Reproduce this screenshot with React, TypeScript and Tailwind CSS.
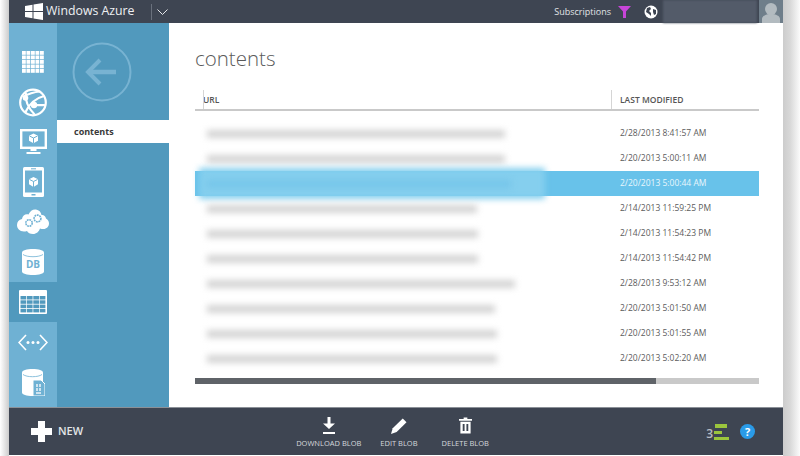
const rows = [
  { w: 298, date: '2/28/2013 8:41:57 AM' },
  { w: 298, date: '2/20/2013 5:00:11 AM' },
  { w: 304, date: '2/20/2013 5:00:44 AM', selected: true },
  { w: 270, date: '2/14/2013 11:59:25 PM' },
  { w: 271, date: '2/14/2013 11:54:23 PM' },
  { w: 271, date: '2/14/2013 11:54:42 PM' },
  { w: 308, date: '2/28/2013 9:53:12 AM' },
  { w: 288, date: '2/20/2013 5:01:50 AM' },
  { w: 290, date: '2/20/2013 5:01:55 AM' },
  { w: 290, date: '2/20/2013 5:02:20 AM' },
];

function WindowsLogo() {
  return (
    <svg width="18" height="17" viewBox="0 0 18 17" fill="#fff">
      <path d="M0 3l7.5-1.3v6.2H0zM8.500 1.500L18 0v7.900H8.500zM0 9h7.500v6.300L0 14zM8.500 9H18v8l-9.500-1.500z" />
    </svg>
  );
}

function GridIcon() {
  return (
    <svg width="22" height="22" viewBox="0 0 22 22" fill="#fff">
      {[0, 1, 2, 3, 4].map((r) =>
        [0, 1, 2, 3, 4].map((c) => <rect key={`${r}-${c}`} x={c * 4.5} y={r * 4.5} width="3.800" height="3.800" />),
      )}
    </svg>
  );
}

function GlobeIcon() {
  return (
    <svg width="28" height="29" viewBox="0 0 28 29" fill="none" stroke="#fff">
      <circle cx="14" cy="14.500" r="12.800" strokeWidth="2.200" />
      <path d="M4 9c5-3 11-5 17-5.500M7 5c-1 7 2 15 9 22M25 8C17 10 10 16 6 25M15 17c4 0 8 .5 11 0" strokeWidth="2.200" />
      <circle cx="6.500" cy="10" r="2.800" fill="#fff" stroke="none" />
      <circle cx="15" cy="17" r="3.200" fill="#fff" stroke="none" />
    </svg>
  );
}

function MonitorIcon() {
  return (
    <svg width="27" height="27" viewBox="0 0 27 27" fill="none">
      <rect x="1.200" y="1.200" width="24.600" height="17.600" stroke="#fff" strokeWidth="2.400" />
      <path d="M13.500 4.500l4.500 2.300v5l-4.500 2.500L9 11.800v-5z" fill="#fff" />
      <path d="M9.500 7l4 2 4-2M13.500 9v5" stroke="#6fb1d3" strokeWidth="1" />
      <path d="M10.500 19h6v3h-6zM6.500 23h14v2h-14z" fill="#fff" />
    </svg>
  );
}

function PhoneIcon() {
  return (
    <svg width="21" height="30" viewBox="0 0 21 30">
      <rect width="21" height="30" rx="1.500" fill="#fff" />
      <rect x="2" y="3.500" width="17" height="22" fill="#6fb1d3" />
      <rect x="8" y="1.300" width="5" height="1" fill="#6fb1d3" />
      <rect x="8.500" y="27" width="4" height="1.500" fill="#6fb1d3" />
      <path d="M10.500 10l4.500 2.300v5L10.500 20 6 17.300v-5z" fill="#fff" />
      <path d="M6.500 12.500l4 2 4-2M10.500 14.500V20" stroke="#6fb1d3" strokeWidth="1" fill="none" />
    </svg>
  );
}

function CloudIcon() {
  return (
    <svg width="32" height="26" viewBox="0 0 32 26">
      <path
        d="M7 22.500C2.500 22.500 0 19.500 0 16c0-3 2-5.500 5-6 .5-3.500 3.500-5.500 6.500-4.500C13 2 16 0 19 .5c3 .5 5 2.500 5.500 5.500 2-.5 4 1 4.500 3.500 2 1 3 3 3 5 0 3-2.500 5.500-5.500 5.500-1.500 0-2.500 0-3.500-.5-1 3-3.500 5.500-7 5.500-3 0-5-1-6-3-1 .5-2 .5-3 .5z"
        fill="#fff"
      />
      <circle cx="12" cy="14" r="3.200" fill="none" stroke="#6fb1d3" strokeWidth="1.600" strokeDasharray="1.800 .7" />
      <circle cx="20.500" cy="9.500" r="3.400" fill="none" stroke="#6fb1d3" strokeWidth="1.600" strokeDasharray="1.800 .7" />
    </svg>
  );
}

function DbIcon() {
  return (
    <svg width="22" height="26" viewBox="0 0 22 26">
      <path d="M0 3.500C0 1.500 5 0 11 0s11 1.500 11 3.500v19c0 2-5 3.500-11 3.500S0 24.500 0 22.500z" fill="#fff" />
      <path d="M1 5.500c2 1.500 6 2.200 10 2.200s8-.7 10-2.200" fill="none" stroke="#6fb1d3" strokeWidth=".8" />
    </svg>
  );
}

function TableIcon() {
  return (
    <svg width="28" height="24" viewBox="0 0 28 24">
      <rect width="28" height="24" rx="1" fill="#fff" />
      {[0, 1, 2, 3].map((r) =>
        [0, 1, 2, 3].map((c) => (
          <rect key={`${r}-${c}`} x={1.500 + c * 6.400} y={6 + r * 4.300} width="5.700" height="3.500" fill="#5199bd" />
        )),
      )}
    </svg>
  );
}

function CodeIcon() {
  return (
    <svg width="30" height="17" viewBox="0 0 30 17" fill="none" stroke="#fff" strokeWidth="1.600">
      <path d="M8 1L1 8.500 8 16M22 1l7 7.500L22 16" />
      <circle cx="10" cy="8.500" r="1.500" fill="#fff" stroke="none" />
      <circle cx="15" cy="8.500" r="1.500" fill="#fff" stroke="none" />
      <circle cx="20" cy="8.500" r="1.500" fill="#fff" stroke="none" />
    </svg>
  );
}

function SqlIcon() {
  return (
    <svg width="23" height="27" viewBox="0 0 23 27">
      <path d="M0 3.500C0 1.500 4.500 0 10.500 0S21 1.500 21 3.500v20c0 2-4.500 3.500-10.500 3.500S0 25.500 0 23.500z" fill="#fff" />
      <path d="M1 5.500c2 1.500 5.500 2.200 9.500 2.200S18 7 20 5.500" fill="none" stroke="#6fb1d3" strokeWidth=".8" />
      <path d="M11 11h8l4 4v12H11z" fill="#6fb1d3" stroke="#fff" strokeWidth="1" />
      <path d="M14 15h2v3h-2zM17 15h2v3h-2zM14 19h2v3h-2zM17 19h2v3h-2zM14 23h5v2h-5z" fill="#cfe4f0" />
    </svg>
  );
}

function BackIcon() {
  return (
    <svg width="60" height="60" viewBox="0 0 60 60" fill="none" stroke="#78b3d2">
      <circle cx="30" cy="30" r="28.500" strokeWidth="2" />
      <path d="M28 18L16 30l12 12" strokeWidth="4" />
      <path d="M18 30h26" strokeWidth="4.500" />
    </svg>
  );
}

function NavItem({ children, active }: { children: React.ReactNode; active?: boolean }) {
  return (
    <div className={`h-[40px] flex items-center justify-center ${active ? 'bg-[#5199bd]' : ''}`}>{children}</div>
  );
}

function FooterAction({ icon, label, className }: { icon: React.ReactNode; label: string; className?: string }) {
  return (
    <div className={`flex flex-col items-center gap-[3px] ${className ?? ''}`}>
      <div className="h-[20px] flex items-center">{icon}</div>
      <span className="text-[7.500px] leading-[9px] text-[#d5d8dc] whitespace-nowrap">{label}</span>
    </div>
  );
}

export default function App() {
  return (
    <div
      className="w-[800px] h-[456px] overflow-hidden flex bg-[linear-gradient(90deg,#fff_0,#ccc_9px,#ccc_783px,#d8d8d8_790px,#fbfbfb_800px)] pr-[17px] pl-[9px]"
      style={{ fontFamily: '"Open Sans", "Liberation Sans", sans-serif' }}
    >
      <div className="flex-1 flex flex-col bg-white min-w-0">
        {/* top bar */}
        <div className="h-[23px] shrink-0 bg-[#3e4552] flex items-center text-white">
          <div className="ml-[16px]"><WindowsLogo /></div>
          <span className="ml-[3px] text-[12.300px] text-[#eef0f2] whitespace-nowrap">Windows Azure</span>
          <div className="ml-[16px] w-px h-[16px] bg-[#6a717d]" />
          <svg className="ml-[5px]" width="11" height="6" viewBox="0 0 11 6" fill="none" stroke="#e6e8ea" strokeWidth="1">
            <path d="M.5.500l5 5 5-5" />
          </svg>
          <span className="ml-auto text-[9px] text-[#e2e4e7] whitespace-nowrap">Subscriptions</span>
          <svg className="ml-[7px]" width="13" height="13" viewBox="0 0 13 13" fill="#c745d8">
            <path d="M0 1h13L8 6.500V13H5V6.500z" />
          </svg>
          <svg className="ml-[13px]" width="14" height="14" viewBox="0 0 14 14">
            <circle cx="7" cy="7" r="6.500" fill="#fff" />
            <path d="M3 3l3-1 1 2-2 2 2 2v3L5 9 2 7zM9 4l3 1v4l-2 1-1-3z" fill="#3e4552" />
          </svg>
          <div className="ml-[5px] w-[94px] h-[23px] bg-[#535b69] blur-[1px]" />
          <div className="ml-[2px] w-[24px] h-[23px] bg-[#6f7e8a] flex items-end justify-center overflow-hidden">
            <svg width="20" height="21" viewBox="0 0 20 21" fill="#b3bbc0">
              <circle cx="10" cy="7" r="6" />
              <path d="M1 21v-4c0-3 4-5 9-5s9 2 9 5v4z" />
            </svg>
          </div>
        </div>

        <div className="flex-1 flex min-h-0">
          {/* icon rail */}
          <div className="w-[48px] shrink-0 bg-[#5199bd] flex flex-col">
            <div className="bg-[#6fb1d3] pt-[19px] flex flex-col">
              <NavItem><GridIcon /></NavItem>
              <NavItem><GlobeIcon /></NavItem>
              <NavItem><MonitorIcon /></NavItem>
              <NavItem><PhoneIcon /></NavItem>
              <NavItem><CloudIcon /></NavItem>
              <NavItem>
                <div className="relative">
                  <DbIcon />
                  <span className="absolute inset-x-0 top-[9px] text-center text-[10px] leading-[12px] font-bold text-[#6fb1d3]">DB</span>
                </div>
              </NavItem>
            </div>
            <NavItem active><TableIcon /></NavItem>
            <div className="bg-[#6fb1d3] flex-1 flex flex-col">
              <NavItem><CodeIcon /></NavItem>
              <NavItem><SqlIcon /></NavItem>
            </div>
          </div>

          {/* sub nav */}
          <div className="w-[112px] shrink-0 bg-[#5199bd]">
            <div className="pl-[15px] pt-[19px]"><BackIcon /></div>
            <div className="mt-[18px] h-[23px] bg-white flex items-center pl-[17px] text-[9px] font-bold text-[#3a3a3a]">contents</div>
          </div>

          {/* content */}
          <div className="flex-1 min-w-0 pl-[26px] pr-[24px] flex flex-col">
            <h1 className="mt-[18px] h-[34px] text-[20.500px] leading-[34px] font-light text-[#5a5a5a]">contents</h1>
            <div className="mt-[15px] h-[21px] flex border-b-2 border-[#c9c9c9] text-[8.500px] font-semibold text-[#555] shrink-0">
              <div className="w-[416px] pl-[8px] relative flex items-center pt-[2px]">
                <span className="absolute left-[8px] top-0 bottom-0 w-px bg-[#d5d5d5]" />
                URL
              </div>
              <div className="flex-1 border-l border-[#d5d5d5] pl-[8px] flex items-center pt-[2px]">LAST MODIFIED</div>
            </div>
            <div className="mt-[10px]">
              {rows.map((row) => (
                <div key={row.date} className={`h-[25px] flex items-center relative ${row.selected ? 'bg-[#68c2ea]' : ''}`}>
                  {row.selected && (
                    <div className="absolute left-[4px] top-[-3px] w-[346px] h-[31px] bg-[#85cfee] blur-[3px]" />
                  )}
                  <div className="w-[416px] shrink-0 pl-[12px] relative">
                    <div
                      className={`h-[8px] blur-[3px] ${row.selected ? 'bg-[#76c6ea]' : 'bg-[#d4d4d4]'}`}
                      style={{ width: row.w }}
                    />
                  </div>
                  <span className={`pl-[9px] text-[8.500px] whitespace-nowrap relative ${row.selected ? 'text-[#e8f6fc]' : 'text-[#5c5c5c]'}`}>
                    {row.date}
                  </span>
                </div>
              ))}
            </div>
            <div className="mt-[7px] h-[6px] bg-[#c9c9c9] shrink-0">
              <div className="w-[461px] h-full bg-[#5f6368]" />
            </div>
          </div>
        </div>

        {/* footer */}
        <div className="h-[48px] shrink-0 bg-[#3e4552] border-t border-[#8b9097] flex items-center text-white">
          <svg className="ml-[22px]" width="21" height="21" viewBox="0 0 21 21" fill="#fff">
            <path d="M7 0h7v7h7v7h-7v7H7v-7H0V7h7z" />
          </svg>
          <span className="ml-[6px] text-[11px] font-semibold text-[#e3e5e8]">NEW</span>
          <FooterAction
            className="ml-[213px]"
            label="DOWNLOAD BLOB"
            icon={
              <svg width="12" height="17" viewBox="0 0 12 17" fill="#fff">
                <path d="M4.500 0h3v6.500H12L6 12 0 6.500h4.500zM0 15h12v2H0z" />
              </svg>
            }
          />
          <FooterAction
            className="ml-[19px]"
            label="EDIT BLOB"
            icon={
              <svg width="16" height="16" viewBox="0 0 17 17" fill="#fff">
                <path d="M12.500 0.500l4 4L6 15 0 17l1.800-6z" />
              </svg>
            }
          />
          <FooterAction
            className="ml-[24px]"
            label="DELETE BLOB"
            icon={
              <svg width="13" height="17" viewBox="0 0 14 17" fill="#fff">
                <path d="M5 0h4v1.500h5V3.500H0V1.500h5zM1.500 4.500h11V17h-11zM4 7v7.500h2V7zM8 7v7.500h2V7z" fillRule="evenodd" />
              </svg>
            }
          />
          <div className="ml-auto mr-[28px] flex items-center">
            <span className="text-[12px] font-semibold text-[#b8bcc2] mt-[4px]">3</span>
            <div className="ml-[1px] flex flex-col gap-[3px] mr-[11px]">
              <div className="ml-px w-[12px] h-[4px] bg-[#9bc53d]" />
              <div className="w-[8px] h-[3px] bg-[#9bc53d]" />
              <div className="w-[15px] h-[3px] bg-[#9bc53d]" />
            </div>
            <div className="w-[15px] h-[15px] rounded-full bg-[#2a9be8] flex items-center justify-center text-[11px] leading-none font-bold text-white">?</div>
          </div>
        </div>
        <div className="h-px bg-white shrink-0" />
      </div>
    </div>
  );
}
